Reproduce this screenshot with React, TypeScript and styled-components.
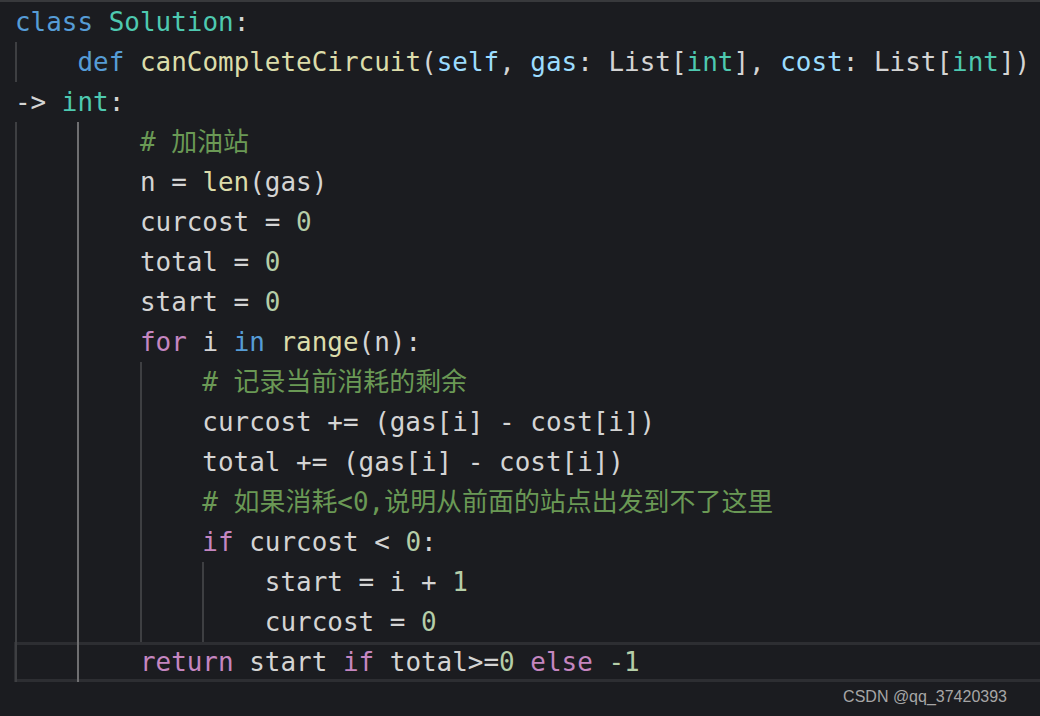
import React from "react";
import styled, { createGlobalStyle } from "styled-components";

const Global = createGlobalStyle`
  html, body { margin: 0; padding: 0; background: #1b1c20; }
  body { width: 1040px; height: 716px; overflow: hidden; }
`;

type Kind = "txt" | "kw" | "ctl" | "cls" | "fn" | "var" | "num" | "cmt";

const colors: Record<Kind, string> = {
  txt: "#d4d4d4",
  kw: "#569cd6",
  ctl: "#c586c0",
  cls: "#4ec9b0",
  fn: "#dcdcaa",
  var: "#9cdcfe",
  num: "#b5cea8",
  cmt: "#6a9955",
};

type Line = {
  guides: number;
  active?: number;
  highlight?: boolean;
  tokens: [string, Kind][];
};

const lines: Line[] = [
  { guides: 0, tokens: [["class", "kw"], [" ", "txt"], ["Solution", "cls"], [":", "txt"]] },
  {
    guides: 1,
    tokens: [
      ["def", "kw"], [" ", "txt"], ["canCompleteCircuit", "fn"], ["(", "txt"], ["self", "var"],
      [", ", "txt"], ["gas", "var"], [": List[", "txt"], ["int", "cls"], ["], ", "txt"],
      ["cost", "var"], [": List[", "txt"], ["int", "cls"], ["])", "txt"],
    ],
  },
  { guides: 0, tokens: [["-> ", "txt"], ["int", "cls"], [":", "txt"]] },
  { guides: 2, active: 1, tokens: [["# 加油站", "cmt"]] },
  { guides: 2, active: 1, tokens: [["n = ", "txt"], ["len", "fn"], ["(gas)", "txt"]] },
  { guides: 2, active: 1, tokens: [["curcost = ", "txt"], ["0", "num"]] },
  { guides: 2, active: 1, tokens: [["total = ", "txt"], ["0", "num"]] },
  { guides: 2, active: 1, tokens: [["start = ", "txt"], ["0", "num"]] },
  {
    guides: 2, active: 1,
    tokens: [["for", "ctl"], [" i ", "txt"], ["in", "kw"], [" ", "txt"], ["range", "fn"], ["(n):", "txt"]],
  },
  { guides: 3, active: 1, tokens: [["# 记录当前消耗的剩余", "cmt"]] },
  { guides: 3, active: 1, tokens: [["curcost += (gas[i] - cost[i])", "txt"]] },
  { guides: 3, active: 1, tokens: [["total += (gas[i] - cost[i])", "txt"]] },
  { guides: 3, active: 1, tokens: [["# 如果消耗<0,说明从前面的站点出发到不了这里", "cmt"]] },
  { guides: 3, active: 1, tokens: [["if", "ctl"], [" curcost < ", "txt"], ["0", "num"], [":", "txt"]] },
  { guides: 4, active: 1, tokens: [["start = i + ", "txt"], ["1", "num"]] },
  { guides: 4, active: 1, tokens: [["curcost = ", "txt"], ["0", "num"]] },
  {
    guides: 2, active: 1, highlight: true,
    tokens: [
      ["return", "ctl"], [" start ", "txt"], ["if", "ctl"], [" total>=", "txt"], ["0", "num"],
      [" ", "txt"], ["else", "ctl"], [" ", "txt"], ["-1", "num"],
    ],
  },
];

const Editor = styled.div`
  border-top: 2px solid #38393c;
  background: #1b1c20;
  font-family: "DejaVu Sans Mono", "Noto Sans CJK SC", monospace;
  font-size: 25.95px;
  display: flex;
  flex-direction: column;
`;

const Row = styled.div<{ $highlight?: boolean }>`
  position: relative;
  height: 40px;
  line-height: 40px;
  display: flex;
  align-items: stretch;
  padding-left: 15px;
  white-space: pre;
  &::after {
    content: "";
    display: ${(p) => (p.$highlight ? "block" : "none")};
    position: absolute;
    left: 14px;
    right: 0;
    top: 0;
    bottom: 0;
    border: 3px solid #2d2e32;
    border-right: none;
    pointer-events: none;
  }
`;

const Guide = styled.span<{ $active?: boolean }>`
  position: relative;
  z-index: 1;
  width: 4ch;
  flex: none;
  box-sizing: border-box;
  border-left: 2px solid ${(p) => (p.$active ? "#6f6f71" : "#3e3f42")};
`;

const Tok = styled.span<{ $kind: Kind }>`
  color: ${(p) => colors[p.$kind]};
`;

const Footer = styled.div`
  display: flex;
  justify-content: flex-end;
  padding: 5px 33px 0 0;
  font-family: "Liberation Sans", Arial, sans-serif;
  font-size: 16px;
  line-height: 20px;
  color: #a6a6a6;
`;

export default function App() {
  return (
    <>
      <Global />
      <Editor>
        {lines.map((l, i) => (
          <Row key={i} $highlight={l.highlight}>
            {Array.from({ length: l.guides }).map((_, g) => (
              <Guide key={g} $active={l.active === g} />
            ))}
            <span>
              {l.tokens.map(([t, k], j) => (
                <Tok key={j} $kind={k}>
                  {t}
                </Tok>
              ))}
            </span>
          </Row>
        ))}
      </Editor>
      <Footer>CSDN @qq_37420393</Footer>
    </>
  );
}
